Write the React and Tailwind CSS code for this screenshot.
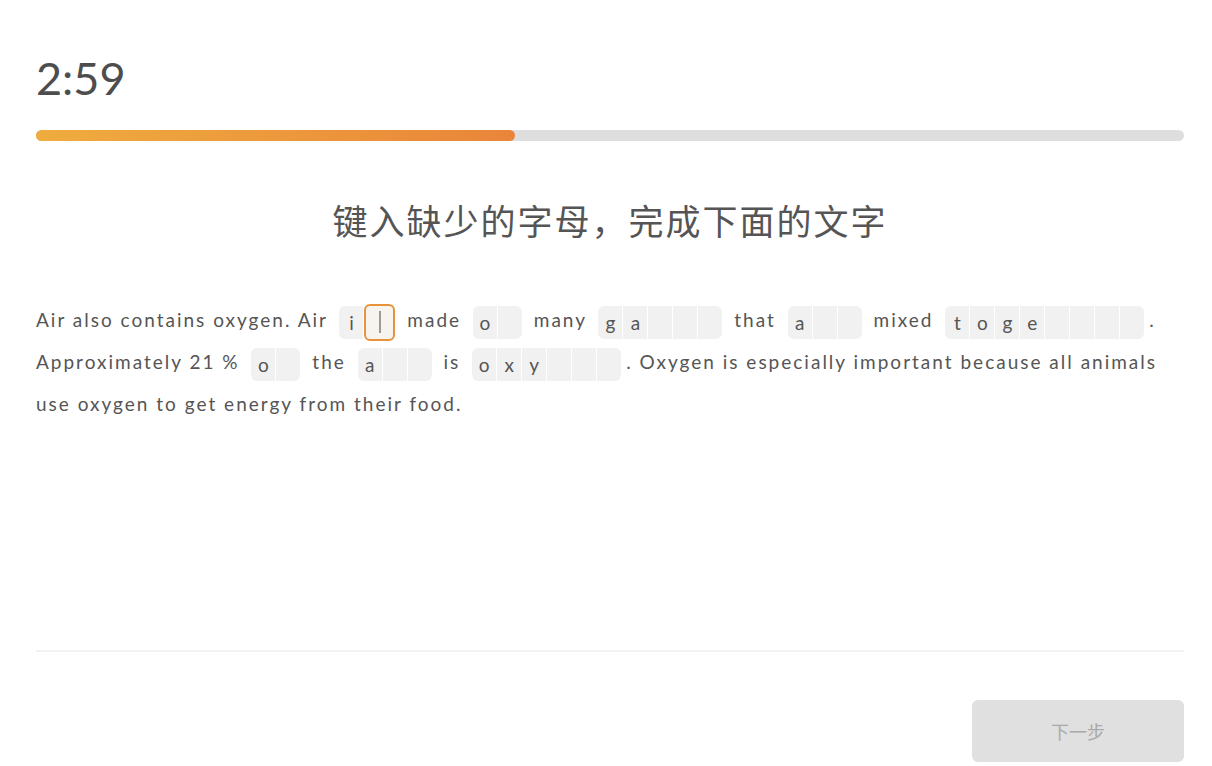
import React from "react";

const font = { fontFamily: "Lato, 'Noto Sans CJK SC', sans-serif" };

function Blank({ letters, total, active = -1 }) {
  const cells = [];
  for (let i = 0; i < total; i++) {
    const ch = letters[i] || "";
    if (i === active) {
      cells.push(
        <span
          key={i}
          className="relative flex h-[37px] w-[31px] -my-[2px] items-center justify-center rounded-[6px] border-2 border-[#e8923c] bg-[#f7f3ef]"
        >
          <span className="h-[22px] w-[2px] bg-[#9a9a9a]" />
        </span>
      );
    } else {
      cells.push(
        <span
          key={i}
          className={
            "flex h-[33px] w-[24px] items-center justify-center bg-[#f1f1f1] text-[19px] tracking-normal text-[#555] " +
            (i === 0 ? "rounded-l-[6px] " : "") +
            (i === total - 1 ? "rounded-r-[6px] " : "")
          }
        >
          {ch}
        </span>
      );
    }
  }
  return (
    <span className="mx-[5px] inline-flex items-center gap-[1px] align-middle leading-none">
      {cells}
    </span>
  );
}

export default function App() {
  return (
    <div className="min-h-[766px] w-[1212px] bg-white" style={font}>
      <div className="ml-[36px] w-[1148px]">
        <div className="pt-[54px] text-[45px] leading-[48px] text-[#4d4d4d]">2:59</div>
        <div className="mt-[28px] h-[11px] w-full rounded-full bg-[#dedede]">
          <div className="h-full w-[41.7%] rounded-full bg-gradient-to-r from-[#efac3e] to-[#e9853a]" />
        </div>
        <h1
          className="mt-[57px] text-center text-[35px] leading-[44px] tracking-[2px] text-[#555]"
          style={{ fontFamily: "'Noto Sans CJK SC', sans-serif" }}
        >
          键入缺少的字母，完成下面的文字
        </h1>
        <p className="mt-[57px] text-[19px] leading-[42px] tracking-[2px] text-[#555]">
          Air also contains oxygen. Air <Blank letters="i" total={2} active={1} /> made{" "}
          <Blank letters="o" total={2} /> many <Blank letters="ga" total={5} /> that{" "}
          <Blank letters="a" total={3} /> mixed <Blank letters="toge" total={8} />. Approximately 21 %{" "}
          <Blank letters="o" total={2} /> the <Blank letters="a" total={3} /> is{" "}
          <Blank letters="oxy" total={6} />. Oxygen is especially important because all animals use
          oxygen to get energy from their food.
        </p>
      </div>
      <div className="ml-[36px] mt-[225px] h-[2px] w-[1148px] bg-[#f2f2f2]" />
      <div className="ml-[36px] flex w-[1148px] justify-end pt-[48px]">
        <button
          className="flex h-[62px] w-[212px] items-center justify-center rounded-[6px] bg-[#e0e0e0] text-[18px] text-[#a9a9a9]"
          style={{ fontFamily: "'Noto Sans CJK SC', sans-serif" }}
        >
          下一步
        </button>
      </div>
    </div>
  );
}
